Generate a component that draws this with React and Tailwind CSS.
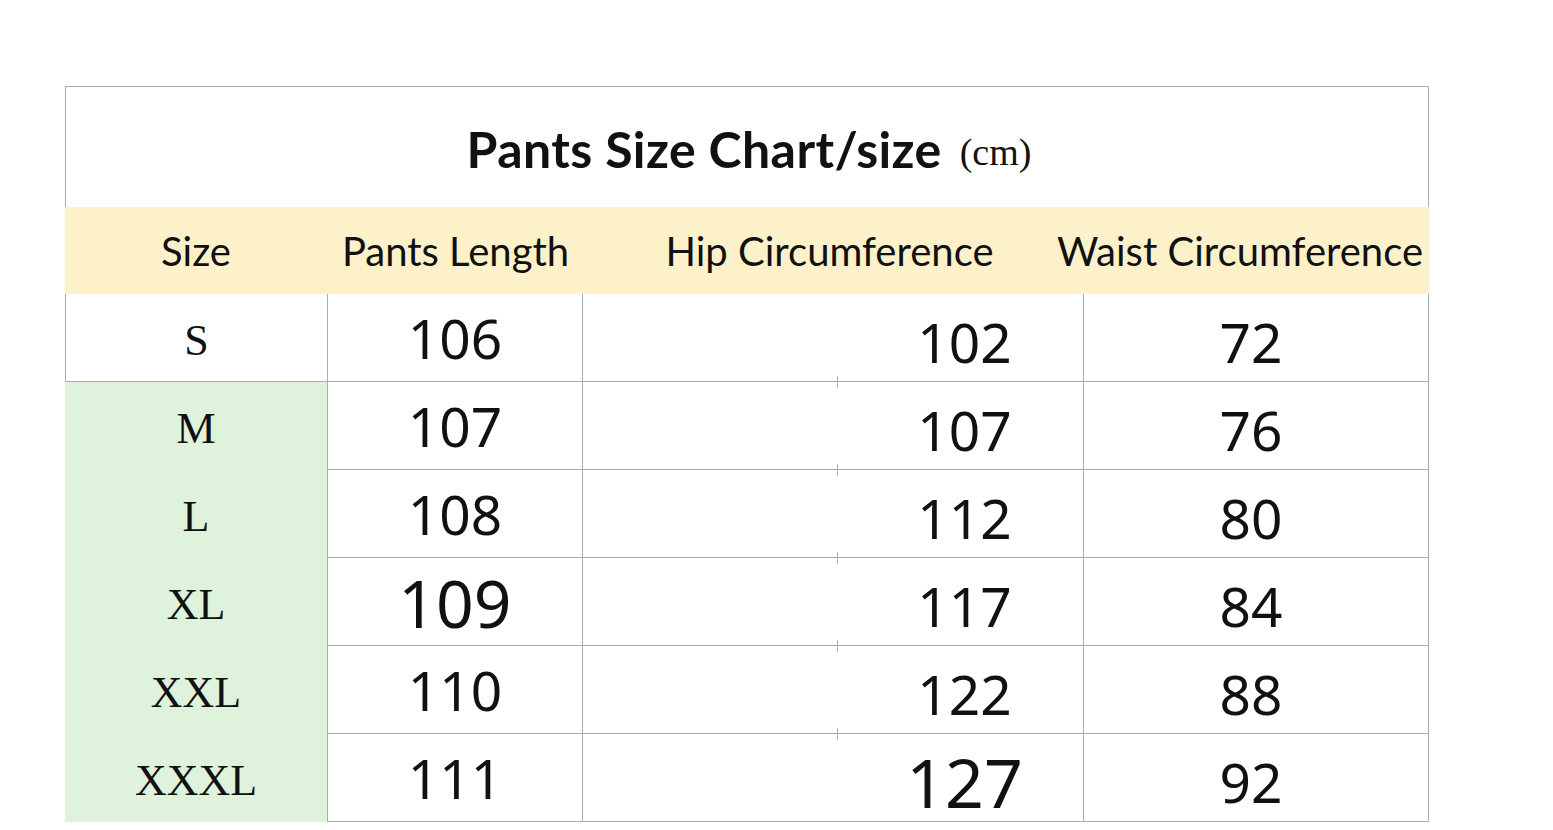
import React from "react";

const rows = [
  { size: "S", length: "106", hip: "102", waist: "72" },
  { size: "M", length: "107", hip: "107", waist: "76" },
  { size: "L", length: "108", hip: "112", waist: "80" },
  { size: "XL", length: "109", hip: "117", waist: "84", big: true },
  { size: "XXL", length: "110", hip: "122", waist: "88" },
  { size: "XXXL", length: "111", hip: "127", waist: "92", hipBig: true },
];

const App = () => {
  return (
    <div className="w-[1553px] h-[830px] bg-white overflow-hidden">
      <div className="ml-[65px] mt-[86px] w-[1364px]">
        {/* Title */}
        <div className="h-[121px] border-t border-l border-r border-[#a7aebb] flex items-center justify-center pt-[4px] pl-[4px]">
          <span className="font-['Lato',sans-serif] font-bold text-[50px] leading-none text-[#111] tracking-[0.4px]">
            Pants Size Chart/size
          </span>
          <span className="ml-[18px] mt-[6px] font-['Liberation_Serif',serif] text-[38px] leading-none text-[#111]">
            (cm)
          </span>
        </div>

        {/* Header */}
        <div className="h-[87px] bg-[#fcf1c9] grid grid-cols-[262px_255px_501px_346px] items-center font-['Lato',sans-serif] text-[40px] leading-none text-[#111] whitespace-nowrap">
          <div className="text-center">Size</div>
          <div className="text-center pl-[2px]">Pants Length</div>
          <div className="text-center pr-[6px]">Hip Circumference</div>
          <div className="flex justify-center pr-[32px]">
            <span>Waist Circumference</span>
          </div>
        </div>

        {/* Body */}
        {rows.map((r, i) => (
          <div
            key={r.size}
            className="h-[88px] grid grid-cols-[262px_255px_501px_346px] font-['Noto_Sans',sans-serif] text-[#111]"
          >
            <div
              className={
                i === 0
                  ? "flex items-center justify-center border-l border-b border-[#a7aebb] bg-white pt-[6px]"
                  : "flex items-center justify-center bg-[#dff2dc] pt-[6px]"
              }
            >
              <span className="font-['Liberation_Serif',serif] text-[44px] leading-none">
                {r.size}
              </span>
            </div>
            <div className="flex items-center justify-center border-l border-b border-[#a7aebb]">
              <span
                className={
                  r.big
                    ? "text-[66px] leading-none"
                    : "text-[55px] leading-none"
                }
              >
                {r.length}
              </span>
            </div>
            <div className="relative flex border-l border-b border-[#a7aebb]">
              <div className="w-[255px]" />
              <div className="flex-1 flex items-center justify-center pt-[8px] pl-[8px]">
                <span
                  className={
                    r.hipBig
                      ? "text-[68px] leading-none"
                      : "text-[55px] leading-none"
                  }
                >
                  {r.hip}
                </span>
              </div>
              {i > 0 && (
                <span className="absolute left-[254px] top-[-6px] h-[12px] w-px bg-[#a7aebb]" />
              )}
            </div>
            <div className="flex items-center justify-center border-l border-r border-b border-[#a7aebb] pt-[8px] pr-[10px]">
              <span className="text-[55px] leading-none">{r.waist}</span>
            </div>
          </div>
        ))}
      </div>
    </div>
  );
};

export default App;
